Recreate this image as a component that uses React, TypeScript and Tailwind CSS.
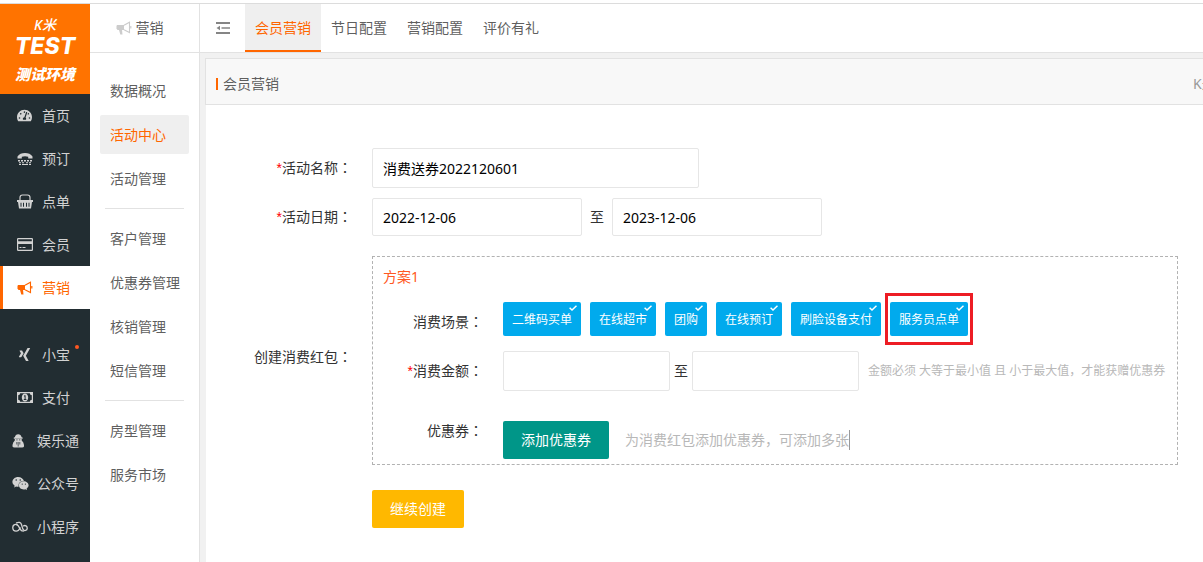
import { useState } from "react";
import { FaXing, FaWeixin, FaTachometerAlt } from "react-icons/fa";

const HornIcon = () => (
  <svg width="16" height="14" viewBox="0 0 16 14" fill="none" stroke="currentColor">
    <path d="M1 4h7v5H1.500L.5 7.500V5z" fill="currentColor" stroke="none" />
    <path d="M3 9h3l.5 4.500H4.300z" fill="currentColor" stroke="none" />
    <path d="M8 4.300 13.500 1.200v10.300L8 8.800" strokeWidth="1.100" />
    <path d="M14.800 5v2.500" strokeWidth="1.200" />
  </svg>
);

const TtyIcon = () => (
  <svg width="16" height="14" viewBox="0 0 16 14" fill="currentColor">
    <path d="M.5 6.500V4.500C2 2 4.800 1 8 1s6 1 7.500 3.500v2h-4.300V4.700C9 4 7 4 4.800 4.700v1.800z" />
    <path d="M1 8h2v1.500H1zM4 8h2v1.500H4zM7 8h2v1.500H7zM10 8h2v1.500h-2zM13 8h2v1.500h-2zM2 10.200h2v1H2zM5 10.200h2v1H5zM9 10.200h2v1H9zM12 10.200h2v1h-2zM2 12h2v1H2zM5 12h6v1H5zM12 12h2v1h-2z" />
  </svg>
);

const BasketIcon = () => (
  <svg width="16" height="15" viewBox="0 0 16 15">
    <path d="M3 7V3.500Q3 1 5.500 1h5Q13 1 13 3.500V7" fill="none" stroke="currentColor" strokeWidth="1.200" />
    <path
      fill="currentColor"
      fillRule="evenodd"
      d="M0 6h16v2h-1l-1 6.500H2L1 8H0zM3.500 8.800v4h1v-4zM6 8.800v4h1v-4zM9 8.800v4h1v-4zM11.500 8.800v4h1v-4z"
    />
  </svg>
);

const CardIcon = () => (
  <svg width="16" height="13" viewBox="0 0 16 13">
    <rect x=".6" y=".6" width="14.800" height="11.800" rx=".6" fill="none" stroke="currentColor" strokeWidth="1.200" />
    <path d="M1 3.200h14V6H1zM2.500 9h2v1h-2zM5.500 9h3v1h-3z" fill="currentColor" />
  </svg>
);

const MoneyIcon = () => (
  <svg width="16" height="11" viewBox="0 0 16 11" fill="currentColor">
    <path fillRule="evenodd" d="M0 0h16v11H0zM3.200 1.200Q3 3 1.200 3.200v4.600Q3 8 3.200 9.800h9.600Q13 8 14.800 7.800V3.200Q13 3 12.800 1.200z" />
    <path fillRule="evenodd" d="M8 1.500c2 0 3.200 1.700 3.200 4S10 9.500 8 9.500 4.800 7.800 4.800 5.500 6 1.500 8 1.500zM7 3.500v1h.6v2.600H6.800v.8h2.600v-.8h-.8V3.200h-.8z" />
  </svg>
);

const GuestIcon = () => (
  <svg width="16" height="14" viewBox="0 0 16 14" fill="currentColor">
    <path d="M2.800 3.200Q3.500.3 6.200.3T9.600 3.200l1 .4v1.200h-8.800V3.600zM2.800 5h6.900v1.500Q11.800 8 12 11v1.500q-.3 1-2 1H2.500q-1.700 0-2-1V11q.3-3 2.300-4.500z" />
    <path d="M4.800 8v2.500M6.200 8v4.500M7.800 8v2.500M4.300 5.900h1.300M7 5.900h1.300" stroke="#222d32" strokeWidth=".7" />
  </svg>
);

const CloudLinkIcon = () => (
  <svg width="17" height="12" viewBox="0 0 17 12" fill="none" stroke="currentColor" strokeWidth="1.400" strokeLinecap="round">
    <path d="M5.500 3.800C3 2.300.8 4.200.8 6.600c0 2.200 1.600 3.800 3.600 3.800 2.600 0 3.400-1.600 4.200-3.400" />
    <path d="M4.800 1.700C7 .5 9.200 1 10 3c.8 2.200.8 4 2 5.800 1 1.600 4 1.200 4.200-1.300C16.300 5 14 3.800 12.300 4.800" />
    <path d="M5.500 3.800C7 4.600 7.500 6 8.500 8c.8 1.600 2 2.400 3.500 2.400" />
  </svg>
);

const OutdentIcon = () => (
  <svg width="16" height="14" viewBox="0 0 16 14" fill="#858585">
    <path d="M1 1h14v2H1zM6.500 6.200H15v1.500H6.500zM1 11h14v2H1zM5 4.800v4.400L1.500 7z" />
  </svg>
);

const mainMenu = [
  { name: "首页", icon: <FaTachometerAlt size={15} /> },
  { name: "预订", icon: <TtyIcon /> },
  { name: "点单", icon: <BasketIcon /> },
  { name: "会员", icon: <CardIcon /> },
  { name: "营销", icon: <HornIcon />, active: true },
];
const extraMenu = [
  { name: "小宝", icon: <FaXing size={15} />, dot: true },
  { name: "支付", icon: <MoneyIcon /> },
  { name: "娱乐通", icon: <GuestIcon /> },
  { name: "公众号", icon: <FaWeixin size={17} className="shrink-0" /> },
  { name: "小程序", icon: <CloudLinkIcon /> },
];
const subMenu = [
  ["数据概况", "活动中心", "活动管理"],
  ["客户管理", "优惠券管理", "核销管理", "短信管理"],
  ["房型管理", "服务市场"],
];
const tabs = ["会员营销", "节日配置", "营销配置", "评价有礼"];
const scenes = ["二维码买单", "在线超市", "团购", "在线预订", "刷脸设备支付", "服务员点单"];

const MenuItem: React.FC<any> = ({ item }) => (
  <a
    href="#"
    className={`flex h-[43px] items-center gap-[9px] border-l-[3px] whitespace-nowrap ${item.name.length > 2 ? "pl-[9px]" : "pl-[14px]"} ${
      item.active ? "border-[#ff6600] bg-white text-[#ff6600]" : "border-transparent text-[#d2d2d2]"
    }`}
  >
    <span className="flex w-4 shrink-0 items-center">{item.icon}</span>
    <span className="relative">
      {item.name}
      {item.dot && <i className="absolute top-0 -right-[9px] h-1 w-1 rounded-full bg-[#ff5722]"></i>}
    </span>
  </a>
);

const LabelText: React.FC<any> = ({ text, required }) => (
  <>
    {required && <span className="font-['Liberation_Sans',sans-serif] leading-none text-[#ff0000]">*</span>}
    {text}
    <span className="font-['Noto_Sans_CJK_TC',sans-serif] leading-none">：</span>
  </>
);

const inputClass = "rounded-[2px] border border-[#e6e6e6] bg-white px-[10px] text-black outline-none";

export default function App() {
  const [selected, setSelected] = useState<string[]>(scenes);
  const [title, setTitle] = useState("消费送券2022120601");
  const [start, setStart] = useState("2022-12-06");
  const [end, setEnd] = useState("2023-12-06");

  const toggle = (name: string) => {
    setSelected(selected.includes(name) ? selected.filter((s) => s !== name) : [...selected, name]);
  };

  return (
    <div className="flex min-h-screen flex-col overflow-x-hidden bg-white pt-[3px] font-['Noto_Sans','Noto_Sans_CJK_SC',sans-serif] text-[14px] leading-5 text-[#333]">
      <div className="flex flex-1 border-t border-[#dcdcdc]">
        <aside className="w-[90px] shrink-0 bg-[#222d32]">
          <div className="flex h-[90px] flex-col items-center bg-[#ff7300] pt-3 text-white italic">
            <span className="h-[18px] text-[14px] leading-[18px] font-medium">K米</span>
            <strong className="h-6 font-['Inter',sans-serif] text-[23px] leading-6 font-extrabold">TEST</strong>
            <strong className="mt-[6px] text-[15px] leading-5 font-black">测试环境</strong>
          </div>
          <nav>
            {mainMenu.map((item) => (
              <MenuItem key={item.name} item={item} />
            ))}
            <div className="h-6"></div>
            {extraMenu.map((item) => (
              <MenuItem key={item.name} item={item} />
            ))}
          </nav>
        </aside>

        <aside className="w-[110px] shrink-0 border-r border-[#e2e2e2] text-[#5f5f5f]">
          <div className="flex h-[49px] items-center justify-center gap-1 border-b border-[#e2e2e2] pr-[10px]">
            <span className="text-[#cccccc]">
              <HornIcon />
            </span>
            营销
          </div>
          <nav className="px-[10px] pt-[18px]">
            {subMenu.map((group, i) => (
              <div key={i} className={`flex flex-col gap-[5px] ${i > 0 ? "pt-[10px]" : ""}`}>
                {group.map((name) => (
                  <a
                    key={name}
                    href="#"
                    className={`h-[39px] rounded-[2px] pl-[10px] leading-[39px] whitespace-nowrap ${name === "活动中心" ? "bg-[#efefef] text-[#ff6600]" : ""}`}
                  >
                    {name}
                  </a>
                ))}
                {i < subMenu.length - 1 && <hr className="mx-[5px] mt-[5px] border-[#e2e2e2]" />}
              </div>
            ))}
          </nav>
        </aside>

        <main className="flex min-w-0 flex-1 flex-col bg-[#f1f1f1]">
          <header className="flex h-[49px] border-b border-[#e2e2e2] bg-white text-[#5f5f5f]">
            <button className="flex w-[45px] cursor-pointer items-center justify-center" aria-label="menu">
              <OutdentIcon />
            </button>
            <nav className="flex">
              {tabs.map((tab, i) => (
                <a
                  key={tab}
                  href="#"
                  className={`border-b-2 px-[10px] leading-[48px] whitespace-nowrap ${i === 0 ? "border-[#ff6600] bg-[#efefef] text-[#ff6600]" : "border-transparent"}`}
                >
                  {tab}
                </a>
              ))}
            </nav>
          </header>

          <section className="mt-[5px] ml-[5px] flex flex-1 flex-col">
            <div className="flex h-[47px] items-center justify-between border-y border-l border-[#e2e2e2] bg-[#f8f8f8] pt-1 pl-[10px] text-[#5f5f5f]">
              <h2 className="flex items-center gap-[5px]">
                <i className="h-3 w-[2px] bg-[#ff6600]"></i>会员营销
              </h2>
              <span className="w-[10px] overflow-hidden whitespace-nowrap text-[#999]">K米</span>
            </div>

            <form className="ml-px flex-1 bg-white pt-[43px] pr-[25px] pb-6">
              <div className="flex items-center gap-5">
                <label htmlFor="title" className="w-[146px] shrink-0 text-right">
                  <LabelText text="活动名称" required />
                </label>
                <input id="title" value={title} onChange={(e) => setTitle(e.target.value)} className={`h-10 w-[327px] ${inputClass}`} />
              </div>

              <div className="mt-[10px] flex items-center gap-5">
                <label htmlFor="start" className="w-[146px] shrink-0 text-right">
                  <LabelText text="活动日期" required />
                </label>
                <div className="flex items-center gap-2">
                  <input id="start" value={start} onChange={(e) => setStart(e.target.value)} className={`h-[38px] w-[210px] ${inputClass}`} />
                  <label htmlFor="end">至</label>
                  <input id="end" value={end} onChange={(e) => setEnd(e.target.value)} className={`h-[38px] w-[210px] ${inputClass}`} />
                </div>
              </div>

              <div className="mt-5 flex items-center gap-5">
                <span id="plan" className="w-[146px] shrink-0 pb-2 text-right">
                  <LabelText text="创建消费红包" />
                </span>
                <div role="group" aria-labelledby="plan" className="min-w-0 flex-1 border border-dashed border-[#b2b2b2] pt-[10px] pb-[5px] whitespace-nowrap">
                  <h3 className="pl-[10px] text-[#ff5722]">方案1</h3>

                  <div className="mt-[15px] flex gap-5">
                    <span className="h-10 w-[110px] shrink-0 text-right leading-10">
                      <LabelText text="消费场景" />
                    </span>
                    <div className="flex h-10 items-start gap-[9px]">
                      {scenes.map((name) => (
                        <div key={name} className="relative">
                          <button
                            type="button"
                            aria-pressed={selected.includes(name)}
                            onClick={() => toggle(name)}
                            className={`relative block h-[34px] cursor-pointer rounded-[2px] px-[9px] pt-[2px] text-[12px] text-white ${selected.includes(name) ? "bg-[#01aaed]" : "bg-[#d2d2d2]"}`}
                          >
                            {name}
                            {selected.includes(name) && (
                              <svg className="absolute top-[3px] right-1" width="8" height="6" viewBox="0 0 8 6" fill="none" stroke="#fff" strokeWidth="1.500">
                                <path d="M.6 2.800 3 5 7.500.7" />
                              </svg>
                            )}
                          </button>
                          {name === "服务员点单" && (
                            <div className="pointer-events-none absolute -inset-x-[5px] -inset-y-[9px] border-[3px] border-[#ed1c24]"></div>
                          )}
                        </div>
                      ))}
                    </div>
                  </div>

                  <div className="mt-[9px] flex gap-5">
                    <label htmlFor="min" className="h-10 w-[110px] shrink-0 text-right leading-10">
                      <LabelText text="消费金额" required />
                    </label>
                    <div className="flex items-center gap-1">
                      <input id="min" className={`h-10 w-[167px] ${inputClass}`} />
                      <label htmlFor="max">至</label>
                      <input id="max" className={`h-10 w-[167px] ${inputClass}`} />
                      <span className="pl-[5px] text-[12px] text-[#b8b8b8]">金额必须 大等于最小值 且 小于最大值，才能获赠优惠券</span>
                    </div>
                  </div>

                  <div className="mt-5 flex gap-5">
                    <span className="h-10 w-[110px] shrink-0 text-right leading-10">
                      <LabelText text="优惠券" />
                    </span>
                    <div className="flex items-center gap-4 pt-[10px]">
                      <button type="button" className="h-[38px] cursor-pointer rounded-[2px] bg-[#009688] px-[18px] text-white">
                        添加优惠券
                      </button>
                      <span className="border-r border-[#999] leading-5 text-[#b8b8b8]">为消费红包添加优惠券，可添加多张</span>
                    </div>
                  </div>
                </div>
              </div>

              <div className="mt-[25px] pl-[166px]">
                <button type="button" className="h-[38px] cursor-pointer rounded-[2px] bg-[#ffb800] px-[18px] text-white">
                  继续创建
                </button>
              </div>
            </form>
          </section>
        </main>
      </div>
    </div>
  );
}
